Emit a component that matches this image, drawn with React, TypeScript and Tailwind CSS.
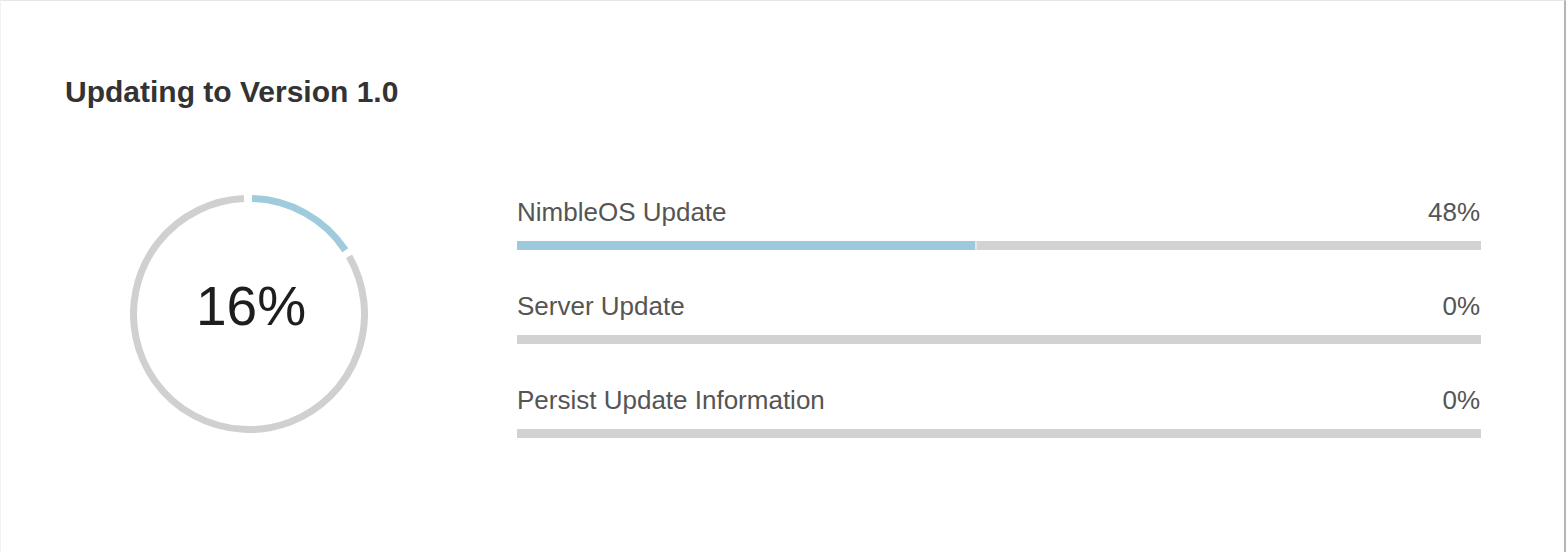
import React from "react";

const font = { fontFamily: '"Liberation Sans", Arial, sans-serif' };

function arcPath(cx: number, cy: number, r: number, a0: number, a1: number) {
  const rad = (a: number) => ((a - 90) * Math.PI) / 180;
  const x0 = cx + r * Math.cos(rad(a0));
  const y0 = cy + r * Math.sin(rad(a0));
  const x1 = cx + r * Math.cos(rad(a1));
  const y1 = cy + r * Math.sin(rad(a1));
  const large = a1 - a0 > 180 ? 1 : 0;
  return `M ${x0} ${y0} A ${r} ${r} 0 ${large} 1 ${x1} ${y1}`;
}

function Ring() {
  const c = 119;
  const r = 115.5;
  return (
    <div className="relative w-[238px] h-[238px] shrink-0">
      <svg width="238" height="238" viewBox="0 0 238 238" className="absolute inset-0">
        <path d={arcPath(c, c, r, 60, 357.5)} fill="none" stroke="#d0d0d0" strokeWidth="7" />
        <path d={arcPath(c, c, r, 1.5, 56.5)} fill="none" stroke="#9fcbdc" strokeWidth="7" />
      </svg>
      <div className="absolute inset-0 flex items-center justify-center pb-[16px] pl-[4px]">
        <span className="text-[55px] leading-[60px] text-[#1e1e1e]">16%</span>
      </div>
    </div>
  );
}

const rows = [
  { label: "NimbleOS Update", pct: 48 },
  { label: "Server Update", pct: 0 },
  { label: "Persist Update Information", pct: 0 },
];

export default function App() {
  return (
    <div
      className="w-[1566px] h-[552px] bg-white border-t border-t-[#e6e6e6] border-r-2 border-r-[#b4b4b4] border-l border-l-[#f2f2f2] overflow-hidden"
      style={font}
    >
      <div className="pt-[74px] pl-[64px]">
        <h1 className="text-[30px] leading-[34px] font-bold text-[#333333]">Updating to Version 1.0</h1>
      </div>
      <div className="flex items-start mt-[86px] pl-[129px]">
        <Ring />
        <div className="ml-[149px] mt-[3px] w-[964px] flex flex-col gap-[42px]">
          {rows.map((row) => (
            <div key={row.label} className="flex flex-col">
              <div className="flex justify-between h-[28px] text-[26px] leading-[28px] text-[#555555]">
                <span>{row.label}</span>
                <span className="pr-[1px]">{row.pct}%</span>
              </div>
              <div className="mt-[15px] h-[9px] bg-[#d2d2d2] flex">
                {row.pct > 0 && (
                  <div className="h-full bg-[#9ccadc] border-r-2 border-r-[#e4e4e4]" style={{ width: `${row.pct * 0.995}%` }} />
                )}
              </div>
            </div>
          ))}
        </div>
      </div>
    </div>
  );
}
